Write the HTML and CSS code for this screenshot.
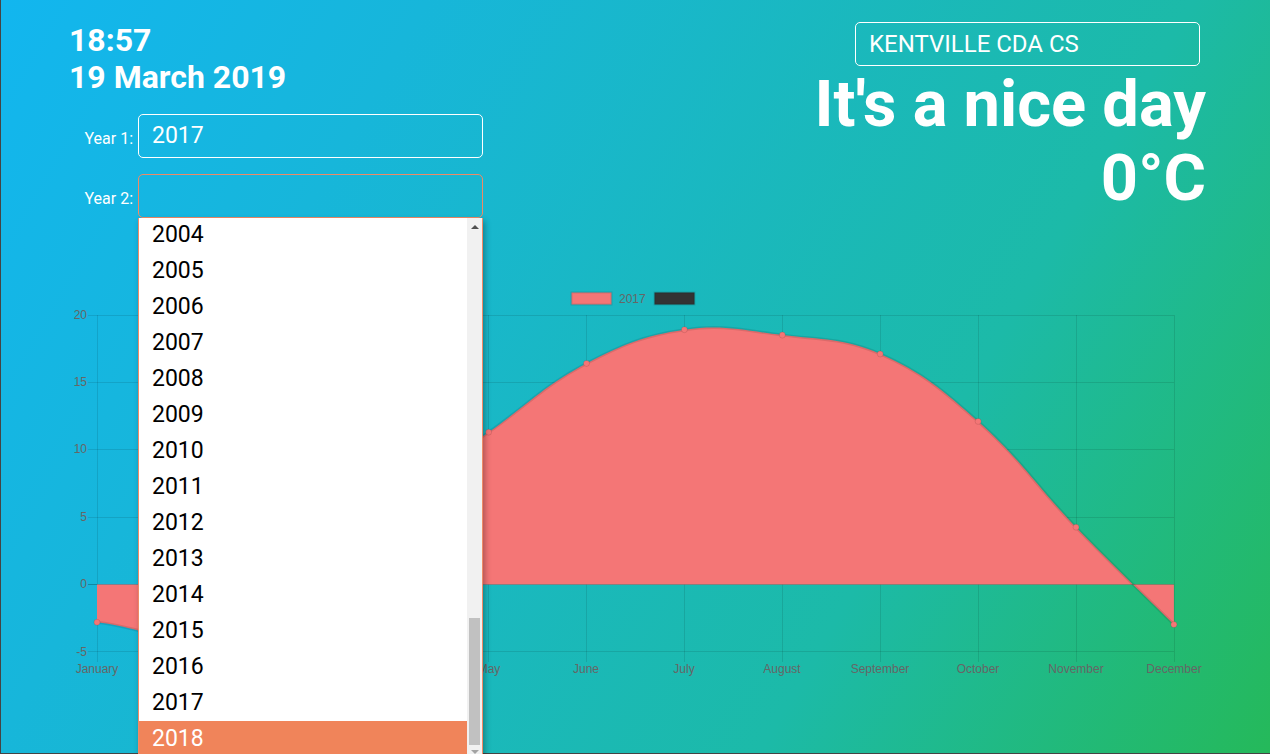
FILE: index.html
```html
<!DOCTYPE html>
<html lang="en">
<head>
<meta charset="utf-8">
<title>Weather</title>
<link rel="stylesheet" href="styles.css">
</head>
<body>
<div class="page">
  <header class="top">
    <div class="left">
      <div class="clock">
        <div>18:57</div>
        <div>19 March 2019</div>
      </div>
      <div class="row first">
        <label class="lbl">Year 1:</label>
        <div class="field">2017</div>
      </div>
      <div class="row">
        <label class="lbl">Year 2:</label>
        <div class="select-wrap">
          <div class="field open"></div>
          <div class="list">
            <div class="opts">
              <div class="opt">2004</div>
              <div class="opt">2005</div>
              <div class="opt">2006</div>
              <div class="opt">2007</div>
              <div class="opt">2008</div>
              <div class="opt">2009</div>
              <div class="opt">2010</div>
              <div class="opt">2011</div>
              <div class="opt">2012</div>
              <div class="opt">2013</div>
              <div class="opt">2014</div>
              <div class="opt">2015</div>
              <div class="opt">2016</div>
              <div class="opt">2017</div>
              <div class="opt sel">2018</div>
            </div>
            <div class="sbar">
              <div class="arrow up"></div>
              <div class="track"><div class="thumb"></div></div>
              <div class="arrow down"></div>
            </div>
          </div>
        </div>
      </div>
    </div>
    <div class="right">
      <div class="field station">KENTVILLE CDA CS</div>
      <div class="big first-big">It's a nice day</div>
      <div class="big">0°C</div>
    </div>
  </header>
  <svg class="chart" width="1269" height="473" viewBox="1 280 1269 473" xmlns="http://www.w3.org/2000/svg">
    <g class="legend">
      <rect x="571.5" y="292.5" width="40" height="12" fill="#f47676" stroke="rgba(0,0,0,0.1)" stroke-width="2"/>
      <text x="619" y="303" class="lab">2017</text>
      <rect x="654.5" y="292.5" width="40" height="12" fill="#333" stroke="rgba(0,0,0,0.1)" stroke-width="2"/>
    </g>
    <g class="grid" stroke="rgba(0,0,0,0.1)" stroke-width="1">
      <line x1="88" y1="315.5" x2="1174" y2="315.5"/>
      <line x1="88" y1="382.5" x2="1174" y2="382.5"/>
      <line x1="88" y1="449.5" x2="1174" y2="449.5"/>
      <line x1="88" y1="517.5" x2="1174" y2="517.5"/>
      <line x1="88" y1="651.5" x2="1174" y2="651.5"/>
      <line x1="97.5" y1="315" x2="97.5" y2="662"/>
      <line x1="195.5" y1="315" x2="195.5" y2="662"/>
      <line x1="293.5" y1="315" x2="293.5" y2="662"/>
      <line x1="391.5" y1="315" x2="391.5" y2="662"/>
      <line x1="488.5" y1="315" x2="488.5" y2="662"/>
      <line x1="586.5" y1="315" x2="586.5" y2="662"/>
      <line x1="684.5" y1="315" x2="684.5" y2="662"/>
      <line x1="782.5" y1="315" x2="782.5" y2="662"/>
      <line x1="880.5" y1="315" x2="880.5" y2="662"/>
      <line x1="978.5" y1="315" x2="978.5" y2="662"/>
      <line x1="1076.5" y1="315" x2="1076.5" y2="662"/>
      <line x1="1174.5" y1="315" x2="1174.5" y2="662"/>
    </g>
    <line x1="88" y1="584.5" x2="1174" y2="584.5" stroke="rgba(0,0,0,0.25)" stroke-width="1"/>
    <g class="ylab">
      <text x="87" y="319">20</text>
      <text x="87" y="386">15</text>
      <text x="87" y="453">10</text>
      <text x="87" y="521">5</text>
      <text x="87" y="588">0</text>
      <text x="87" y="656">-5</text>
    </g>
    <g class="xlab">
      <text x="97" y="673">January</text>
      <text x="195" y="673">February</text>
      <text x="293" y="673">March</text>
      <text x="391" y="673">April</text>
      <text x="489" y="673">May</text>
      <text x="586" y="673">June</text>
      <text x="684" y="673">July</text>
      <text x="782" y="673">August</text>
      <text x="880" y="673">September</text>
      <text x="978" y="673">October</text>
      <text x="1076" y="673">November</text>
      <text x="1174" y="673">December</text>
    </g>
    <path id="area" fill="#f47676" d=""/>
    <path id="line" fill="none" stroke="rgba(0,0,0,0.1)" stroke-width="3" d=""/>
    <g id="points"></g>
  </svg>
</div>
<script src="script.js"></script>
</body>
</html>
```
FILE: styles.css
```css
* { box-sizing: border-box; }
html, body { margin: 0; padding: 0; }
body {
  font-family: Roboto, "Noto Sans", sans-serif;
  color: #fff;
  overflow: hidden;
  background: #fff;
}
.page {
  width: 1270px;
  height: 754px;
  border-left: 1px solid #444;
  border-bottom: 1px solid #444;
  background: linear-gradient(120deg, #12b6ef 0%, #17b6da 25%, #1cbaa8 70%, #25b95a 100%);
}
.top {
  display: flex;
  justify-content: space-between;
  height: 280px;
  padding: 22px 64px 0 68px;
}
.clock {
  font-weight: 700;
  font-size: 32px;
  line-height: 37px;
}
.row {
  display: flex;
  align-items: center;
  margin-top: 16px;
}
.row.first { margin-top: 18px; }
.lbl {
  width: 64px;
  margin-right: 5px;
  padding-top: 5px;
  text-align: right;
  font-size: 16px;
}
.field {
  width: 345px;
  height: 44px;
  border: 1px solid #fff;
  border-radius: 5px;
  padding-left: 13px;
  font-size: 23px;
  line-height: 42px;
  color: #fff;
}
.field.open { border-color: #ef8a66; }
.select-wrap { position: relative; }
.list {
  position: absolute;
  top: 44px;
  left: 0;
  width: 345px;
  height: 536px;
  display: flex;
  background: #fff;
  border-left: 1px solid #ef8a66;
  border-right: 1px solid #ef8a66;
  box-shadow: 2px 3px 6px rgba(0,0,0,0.3);
  overflow: hidden;
  z-index: 5;
}
.opts {
  flex: 1;
  margin-top: -1px;
}
.opt {
  height: 36px;
  line-height: 36px;
  padding-left: 13px;
  font-size: 23px;
  color: #000;
}
.opt.sel {
  background: #f0845a;
  color: #fff;
}
.sbar {
  width: 15px;
  background: #f1f1f1;
  display: flex;
  flex-direction: column;
  align-items: center;
}
.arrow {
  width: 0;
  height: 0;
  border-left: 4px solid transparent;
  border-right: 4px solid transparent;
}
.arrow.up {
  margin-top: 7px;
  margin-bottom: 6px;
  border-bottom: 4px solid #505050;
}
.arrow.down {
  margin-top: 5px;
  border-top: 4px solid #a3a3a3;
}
.track {
  flex: 1;
  width: 100%;
  display: flex;
  flex-direction: column;
  justify-content: flex-end;
  align-items: center;
}
.thumb {
  width: 11px;
  height: 127px;
  background: #c1c1c1;
}
.right {
  width: 352px;
  display: flex;
  flex-direction: column;
  align-items: flex-end;
}
.station {
  margin-right: 6px;
  font-size: 24px;
}
.big {
  font-size: 65px;
  font-weight: 700;
  line-height: 74px;
  white-space: nowrap;
}
.first-big { margin-top: 1px; }
.chart { display: block; }
.lab, .ylab text, .xlab text {
  font-family: "Liberation Sans", Arial, sans-serif;
  font-size: 12px;
  fill: #666;
}
.ylab text { text-anchor: end; }
.xlab text { text-anchor: middle; }
```
FILE: script.js
```js
(function () {
  var data = [-2.8, -3.6, 0.6, 6.2, 11.3, 16.4, 18.9, 18.5, 17.1, 12.1, 4.25, -2.97];
  var x0 = 97, dx = 97.9, zero = 584.5, k = 13.48;
  var top = 315, bottom = 652, left = 97, right = 1174;
  var pts = data.map(function (v, i) { return { x: x0 + dx * i, y: zero - v * k }; });
  var t = 0.4;
  var cps = pts.map(function (cur, i) {
    var prev = pts[i - 1] || cur, next = pts[i + 1] || cur;
    var d01 = Math.hypot(cur.x - prev.x, cur.y - prev.y);
    var d12 = Math.hypot(next.x - cur.x, next.y - cur.y);
    var s01 = d01 / (d01 + d12) || 0, s12 = d12 / (d01 + d12) || 0;
    var fa = t * s01, fb = t * s12;
    function cap(p) {
      p.x = Math.max(left, Math.min(right, p.x));
      p.y = Math.max(top, Math.min(bottom, p.y));
      return p;
    }
    return {
      prev: cap({ x: cur.x - fa * (next.x - prev.x), y: cur.y - fa * (next.y - prev.y) }),
      next: cap({ x: cur.x + fb * (next.x - prev.x), y: cur.y + fb * (next.y - prev.y) })
    };
  });
  var d = 'M' + pts[0].x + ' ' + pts[0].y;
  for (var i = 1; i < pts.length; i++) {
    var a = cps[i - 1].next, b = cps[i].prev, p = pts[i];
    d += ' C' + a.x.toFixed(2) + ' ' + a.y.toFixed(2) + ' ' + b.x.toFixed(2) + ' ' + b.y.toFixed(2) + ' ' + p.x.toFixed(2) + ' ' + p.y.toFixed(2);
  }
  var last = pts[pts.length - 1];
  document.getElementById('line').setAttribute('d', d);
  document.getElementById('area').setAttribute('d', d + ' L' + last.x + ' ' + zero + ' L' + pts[0].x + ' ' + zero + ' Z');
  var g = document.getElementById('points');
  var ns = 'http://www.w3.org/2000/svg';
  pts.forEach(function (p) {
    var c = document.createElementNS(ns, 'circle');
    c.setAttribute('cx', p.x);
    c.setAttribute('cy', p.y);
    c.setAttribute('r', 3);
    c.setAttribute('fill', '#f47676');
    c.setAttribute('stroke', 'rgba(0,0,0,0.1)');
    c.setAttribute('stroke-width', 1);
    g.appendChild(c);
  });
})();
```
